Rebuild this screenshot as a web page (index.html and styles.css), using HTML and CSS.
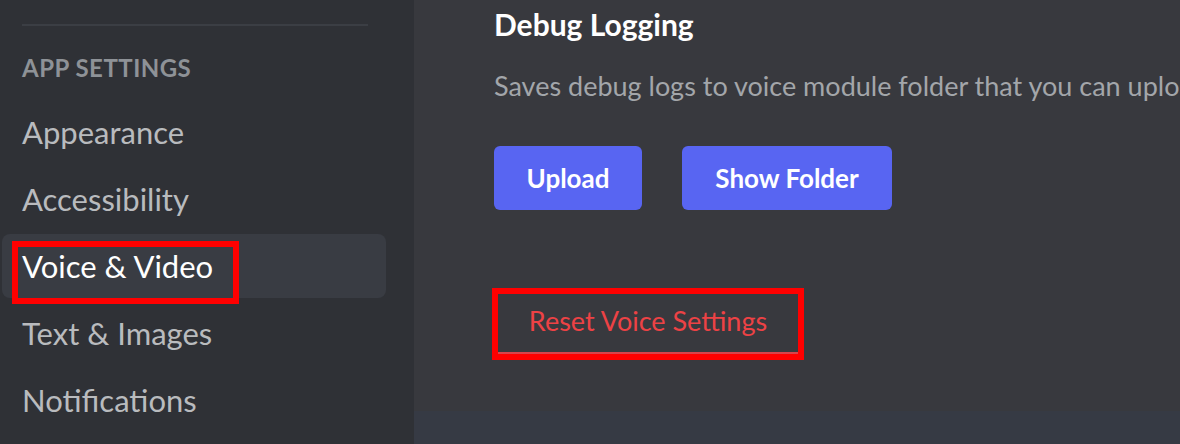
FILE: index.html
```html
<!DOCTYPE html>
<html lang="en">
<head>
<meta charset="utf-8">
<title>Voice &amp; Video Settings</title>
<link rel="stylesheet" href="styles.css">
</head>
<body>
<div class="app">
  <nav class="sidebar">
    <div class="divider"></div>
    <div class="nav-heading">APP SETTINGS</div>
    <div class="nav-item">Appearance</div>
    <div class="nav-item">Accessibility</div>
    <div class="nav-item selected"><span class="highlight">Voice &amp; Video</span></div>
    <div class="nav-item">Text &amp; Images</div>
    <div class="nav-item">Notifications</div>
  </nav>
  <main class="main">
    <div class="content">
      <h2 class="title">Debug Logging</h2>
      <p class="description">Saves debug logs to voice module folder that you can upload to support for troubleshooting.</p>
      <div class="button-row">
        <button class="btn btn-brand btn-upload">Upload</button>
        <button class="btn btn-brand btn-folder">Show Folder</button>
      </div>
      <button class="btn-reset">Reset Voice Settings</button>
    </div>
    <div class="footer-strip"></div>
  </main>
</div>
</body>
</html>
```
FILE: styles.css
```css
html, body {
  margin: 0;
  padding: 0;
  height: 100%;
  overflow: hidden;
}

body {
  font-family: Lato, "Open Sans", "Liberation Sans", sans-serif;
  background: #38393e;
}

.app {
  display: flex;
  height: 444px;
  width: 1180px;
}

.sidebar {
  width: 414px;
  flex: none;
  background: #2f3136;
  padding: 24px 28px 0 2px;
  box-sizing: border-box;
  display: flex;
  flex-direction: column;
}

.divider {
  height: 2px;
  margin: 0 18px 0 20px;
  background: #3b3e44;
}

.nav-heading {
  margin: 26px 0 16px 20px;
  font-size: 24px;
  line-height: 32px;
  font-weight: 700;
  color: #8e9297;
  letter-spacing: 0.02em;
}

.nav-item {
  height: 64px;
  box-sizing: border-box;
  padding: 12px 20px;
  font-size: 31px;
  line-height: 40px;
  color: #b9bbbe;
  border-radius: 8px;
  margin-bottom: 3px;
  white-space: nowrap;
}

.nav-item.selected {
  background: #393c43;
  color: #ffffff;
}

.highlight {
  position: relative;
}

.highlight::after {
  content: "";
  position: absolute;
  left: -10px;
  right: -26px;
  top: -6px;
  bottom: -19px;
  border: 6px solid #ff0000;
}

.main {
  flex: 1;
  min-width: 0;
  display: flex;
  flex-direction: column;
  background: #38393e;
  overflow: hidden;
}

.content {
  flex: 1;
  padding: 4px 0 0 80px;
  display: flex;
  flex-direction: column;
  align-items: flex-start;
}

.title {
  margin: 0;
  font-size: 30px;
  line-height: 40px;
  font-weight: 700;
  color: #ffffff;
}

.description {
  margin: 22px 0 0 0;
  font-size: 27px;
  line-height: 40px;
  color: #a3a6aa;
  white-space: nowrap;
}

.button-row {
  display: flex;
  gap: 40px;
  margin-top: 40px;
}

.btn {
  border: none;
  font-family: inherit;
  height: 64px;
  border-radius: 6px;
  font-size: 26px;
  font-weight: 700;
  color: #ffffff;
  padding: 0;
}

.btn-brand {
  background: #5865f2;
}

.btn-upload {
  width: 148px;
}

.btn-folder {
  width: 210px;
}

.btn-reset {
  margin: 78px 0 0 -2px;
  width: 312px;
  height: 72px;
  box-sizing: border-box;
  border: 6px solid #ff0000;
  background: transparent;
  box-shadow: inset 0 -2px 0 #d9434a;
  font-family: inherit;
  font-size: 27px;
  line-height: 40px;
  color: #ed4245;
  padding: 0 0 6px 0;
  text-align: center;
}

.footer-strip {
  height: 33px;
  flex: none;
  background: #363a44;
}
```
